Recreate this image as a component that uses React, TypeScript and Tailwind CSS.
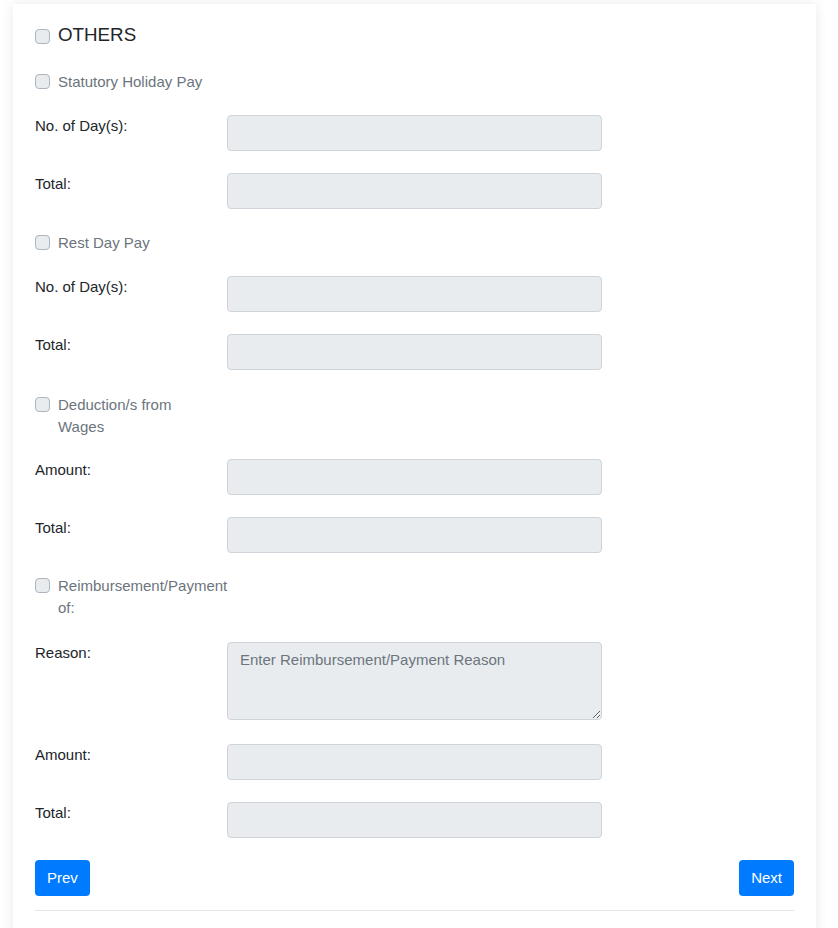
import React from "react";

const Box = () => (
  <span className="mt-[3px] block h-[15px] w-[15px] shrink-0 rounded-[4px] border border-[#adb5bd] bg-[#e9ecef]" />
);

const CheckRow = ({ text, w, mt }: { text: string; w: string; mt: string }) => (
  <div className={`flex items-start gap-[8px] ${mt}`}>
    <Box />
    <span className={`${w} text-[15px] leading-[22px] text-[#6c757d]`}>{text}</span>
  </div>
);

const InputRow = ({ label, mt }: { label: string; mt: string }) => (
  <div className={`flex items-start ${mt}`}>
    <label className="w-[192px] shrink-0 text-[15px] leading-[22.5px] text-[#212529]">{label}</label>
    <input
      readOnly
      className="h-[35.75px] w-[375px] rounded-[4px] border border-[#ced4da] bg-[#e9ecef] px-[12px] text-[15px] outline-none"
    />
  </div>
);

export default function App() {
  return (
    <div className="min-h-[928px] bg-white pt-[4px] font-['Liberation_Sans',Arial,sans-serif]">
      <div className="ml-[13px] w-[803px] bg-white px-[22px] pb-[40px] pt-[20px] shadow-[0_0_12px_rgba(0,0,0,0.09)]">
        <div className="flex items-start gap-[8px]">
          <span className="mt-[5px] block h-[15px] w-[15px] shrink-0 rounded-[4px] border border-[#adb5bd] bg-[#e9ecef]" />
          <span className="text-[18.75px] leading-[22.5px] text-[#212529]">OTHERS</span>
        </div>

        <CheckRow text="Statutory Holiday Pay" w="w-[200px]" mt="mt-[24px]" />
        <InputRow label="No. of Day(s):" mt="mt-[22.5px]" />
        <InputRow label="Total:" mt="mt-[22.25px]" />

        <CheckRow text="Rest Day Pay" w="w-[200px]" mt="mt-[23px]" />
        <InputRow label="No. of Day(s):" mt="mt-[22.25px]" />
        <InputRow label="Total:" mt="mt-[22.25px]" />

        <CheckRow text="Deduction/s from Wages" w="w-[150px]" mt="mt-[24px]" />
        <InputRow label="Amount:" mt="mt-[21.25px]" />
        <InputRow label="Total:" mt="mt-[22.25px]" />

        <CheckRow text="Reimbursement/Payment of:" w="w-[175px]" mt="mt-[22px]" />
        <div className="mt-[23.25px] flex items-start">
          <label className="w-[192px] shrink-0 text-[15px] leading-[22.5px] text-[#212529]">Reason:</label>
          <textarea
            readOnly
            placeholder="Enter Reimbursement/Payment Reason"
            className="block h-[78px] w-[375px] rounded-[4px] border border-[#ced4da] bg-[#e9ecef] px-[12px] py-[6px] text-[15px] leading-[22.5px] text-[#495057] outline-none placeholder:text-[#6c757d]"
          />
        </div>
        <InputRow label="Amount:" mt="mt-[24px]" />
        <InputRow label="Total:" mt="mt-[22.25px]" />

        <div className="mt-[22.25px] flex justify-between">
          <button className="h-[35.75px] rounded-[4px] bg-[#007bff] px-[12px] text-[15px] leading-[22.5px] text-white">Prev</button>
          <button className="h-[35.75px] rounded-[4px] bg-[#007bff] px-[12px] text-[15px] leading-[22.5px] text-white">Next</button>
        </div>
        <div className="mt-[14.25px] h-px bg-[#e5e5e5]" />
      </div>
    </div>
  );
}
